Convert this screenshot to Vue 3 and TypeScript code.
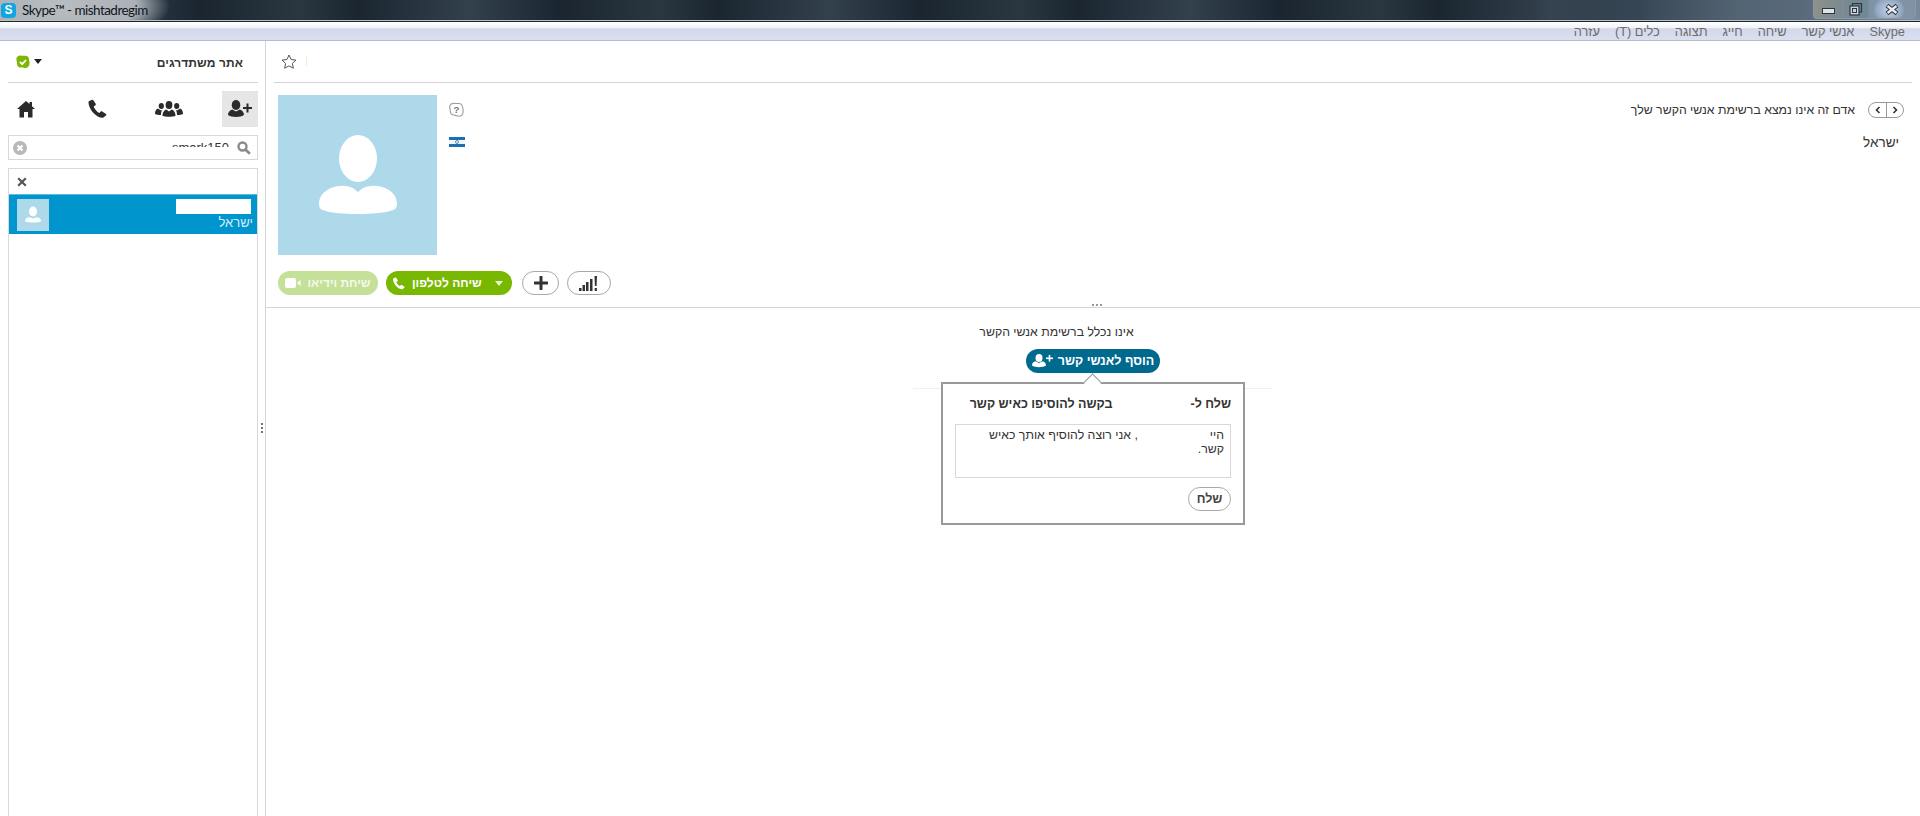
<script setup lang="ts">
const menu: string[] = ['Skype', 'אנשי קשר', 'שיחה', 'חייג', 'תצוגה', 'כלים (T)', 'עזרה']
</script>

<template>
  <div class="app">
    <header class="titlebar">
      <div class="title-left">
        <span class="s-logo">S</span>
        <span class="title-text">Skype™ - mishtadregim</span>
      </div>
      <div class="winbtns">
        <button class="wb wb-min"><i></i></button>
        <button class="wb wb-max">
          <svg width="14" height="13" viewBox="0 0 14 13"><rect x="3.500" y="0.500" width="9" height="8.500" fill="none" stroke="#2c3640" stroke-width="1.200" /><rect x="1" y="3" width="9" height="9" fill="#c9d2da" stroke="#2c3640" stroke-width="1.200" /><rect x="3.500" y="5.500" width="4" height="4" fill="none" stroke="#2c3640" /></svg>
        </button>
        <button class="wb wb-close">
          <svg width="14" height="11" viewBox="0 0 14 11"><path d="M2 1.500l10 8m0-8-10 8" stroke="#27313a" stroke-width="4.400" /><path d="M2.500 2l9 7m0-7-9 7" stroke="#e6ebf0" stroke-width="2.400" /></svg>
        </button>
      </div>
    </header>
    <nav class="menubar">
      <span v-for="m in menu" :key="m" class="menu-item" dir="rtl">{{ m }}</span>
    </nav>
    <div class="body">
      <aside class="side">
        <div class="me">
          <div class="status">
            <svg width="14" height="14" viewBox="0 0 14 14"><path d="M4 .5C5 .3 6 .8 7 .8c1.300 0 3-.6 4.500.5 1.400 1 1.400 2.500 1.600 3.700.2 1.300.8 2.700.3 4.500-.4 1.800-1.900 3.500-3.900 3.500-1.300 0-2.200-.6-3.500-.8C4.500 12.500 3 12.600 1.900 11.200.8 10 1 8.500.9 7.200.8 5.600 0 4.300.6 2.700 1 1.500 2.500.7 4 .5Z" fill="#7db701" /><path d="M4 7l2.200 2.200L10 5" fill="none" stroke="#fff" stroke-width="1.800" /></svg>
            <span class="caret"></span>
          </div>
          <span class="me-name" dir="rtl">אתר משתדרגים</span>
        </div>
        <div class="tabs">
          <button class="tab">
            <svg width="20" height="18" viewBox="0 0 20 18"><path d="M10 1 1 9h2.500v8.500h4.500v-5.500h4v5.500h4.500V9H19l-3-2.700V2h-2.500v2.100Z" fill="#2b2b2b" /></svg>
          </button>
          <button class="tab">
            <svg width="20" height="20" viewBox="0 0 20 20"><path d="M4.500 1 1.700 2.300C1 4.500 2.500 9 5.500 13c3 3.600 7 6 10.500 5.800l3-2.400c.5-.6.300-1.300-.3-1.700l-3.500-2.300c-.6-.3-1.200-.2-1.700.3l-1.200 1.300c-2.200-1-4.800-4-5.600-6.500l1.500-1c.6-.5.800-1.100.5-1.800L6.500 1.600C6 .9 5.200.7 4.500 1Z" fill="#2b2b2b" /></svg>
          </button>
          <button class="tab">
            <svg width="28" height="16" viewBox="0 0 28 16"><g fill="#2b2b2b"><ellipse cx="14" cy="4" rx="3.400" ry="3.900" /><path d="M7.500 15c0-4 2-6 3.800-6.500l2.700 2 2.700-2c1.800.5 3.800 2.500 3.800 6.500-3 1-10 1-13 0Z" /><ellipse cx="6.300" cy="5" rx="2.600" ry="3" /><path d="M0 13c0-3 1-5 2.800-5.600l3.300 2 1.600-.8C6.500 10 6 11.500 6 14 3.500 14 1.500 13.800 0 13Z" /><ellipse cx="21.700" cy="5" rx="2.600" ry="3" /><path d="M28 13c0-3-1-5-2.800-5.600l-3.300 2-1.600-.8c1.200 1.400 1.700 2.900 1.700 5.400 2.500 0 4.500-.2 6-1Z" /></g></svg>
          </button>
          <button class="tab active">
            <svg width="24" height="18" viewBox="0 0 24 18"><g fill="#2b2b2b"><ellipse cx="8" cy="5" rx="4.300" ry="5" /><path d="M0 15c0-3 2-5 4.200-5.600L8 11.500l3.800-2.100C14 10 16 12 16 15c-3 2.500-13 2.500-16 0Z" /><rect x="15" y="7" width="9" height="2" /><rect x="18.500" y="3.500" width="2" height="9" /></g></svg>
          </button>
        </div>
        <div class="search">
          <span class="clear">
            <svg width="14" height="14" viewBox="0 0 14 14"><circle cx="7" cy="7" r="7" fill="#b9b9b9" /><path d="M4.500 4.500l5 5m0-5-5 5" stroke="#fff" stroke-width="2" /></svg>
          </span>
          <span class="search-text">smark150</span>
          <svg width="14" height="14" viewBox="0 0 14 14"><circle cx="5.500" cy="5.500" r="4" fill="none" stroke="#8b8b8b" stroke-width="2.400" /><path d="M8.500 8.500l4.300 4.300" stroke="#8b8b8b" stroke-width="2.800" /></svg>
        </div>
        <div class="results">
          <div class="results-head">
            <svg width="10" height="10" viewBox="0 0 10 10"><path d="M1.200 1.200l7.600 7.600m0-7.600-7.600 7.600" stroke="#555" stroke-width="2.200" /></svg>
          </div>
          <div class="result">
            <div class="mini-avatar">
              <svg width="18" height="18" viewBox="0 0 18 18"><ellipse cx="9" cy="5.500" rx="4" ry="5" fill="#fff" /><path d="M1 15c0-2.500 2-3.500 4.500-3.800L9 12.500l3.500-1.300C15 11.500 17 12.500 17 15c0 2-16 2-16 0Z" fill="#fff" /></svg>
            </div>
            <div class="result-text">
              <span class="redact"></span>
              <span class="result-country" dir="rtl">ישראל</span>
            </div>
          </div>
        </div>
      </aside>
      <div class="gripper"><i></i><i></i><i></i></div>
      <main class="main">
        <div class="toolbar">
          <svg width="16" height="15" viewBox="0 0 16 15"><path d="M8 1l2.100 4.500 4.900.6-3.600 3.300.9 4.800L8 11.900l-4.300 2.300.9-4.800L1 6.100l4.900-.6Z" fill="none" stroke="#555" stroke-width="1" /></svg>
          <span class="tick"></span>
        </div>
        <section class="profile">
          <div class="profile-top">
            <div class="big-avatar">
              <svg width="80" height="80" viewBox="0 0 80 80"><ellipse cx="40" cy="23.500" rx="19" ry="23.500" fill="#fff" /><path d="M1 69c0-8 5-13 12-16 8-3 15-3 22 0l5 4 5-4c7-3 14-3 22 0 7 3 12 8 12 16 0 4-2 6-7 7-11 4-54 4-64 0C3 75 1 73 1 69Z" fill="#fff" /></svg>
            </div>
            <div class="icons-col">
              <svg width="15" height="16" viewBox="0 0 14 14"><path d="M4 .8C5 .6 6 1 7 1c1.300 0 3-.5 4.300.5 1.300 1 1.300 2.400 1.500 3.600.2 1.300.7 2.600.3 4.300-.4 1.700-1.800 3.400-3.700 3.400-1.300 0-2.200-.6-3.400-.8-1.400-.2-2.900-.1-3.900-1.400C1 9.400 1.200 8 1.100 6.800 1 5.400.3 4.200.9 2.800 1.300 1.700 2.600 1 4 .8Z" fill="none" stroke="#9b9b9b" stroke-width="1" /><text x="7" y="10" text-anchor="middle" class="q">?</text></svg>
              <span class="flag"><i></i></span>
            </div>
            <div class="profile-info">
              <div class="status-line">
                <span class="status-msg" dir="rtl">אדם זה אינו נמצא ברשימת אנשי הקשר שלך</span>
                <span class="pager">
                  <svg width="8" height="8" viewBox="0 0 8 8"><path d="M5.500 1 2.500 4l3 3" fill="none" stroke="#333" stroke-width="1.600" /></svg>
                  <svg width="8" height="8" viewBox="0 0 8 8"><path d="M2.500 1l3 3-3 3" fill="none" stroke="#333" stroke-width="1.600" /></svg>
                </span>
              </div>
              <div class="country" dir="rtl">ישראל</div>
            </div>
          </div>
          <div class="actions">
            <button class="btn video">
              <svg width="16" height="10" viewBox="0 0 16 10"><rect width="11" height="10" rx="2" fill="#fff" /><path d="M12 5l3.500-3v6Z" fill="#fff" /></svg>
              <span dir="rtl">שיחת וידיאו</span>
            </button>
            <button class="btn call">
              <svg width="13" height="13" viewBox="0 0 20 20"><path d="M4.500 1 1.700 2.300C1 4.500 2.500 9 5.500 13c3 3.600 7 6 10.500 5.800l3-2.400c.5-.6.300-1.300-.3-1.700l-3.500-2.300c-.6-.3-1.200-.2-1.700.3l-1.200 1.300c-2.200-1-4.800-4-5.600-6.500l1.500-1c.6-.5.800-1.100.5-1.800L6.500 1.600C6 .9 5.200.7 4.500 1Z" fill="#fff" /></svg>
              <span dir="rtl">שיחה לטלפון</span>
              <span class="call-caret"></span>
            </button>
            <button class="btn round plus">
              <svg width="14" height="14" viewBox="0 0 14 14"><path d="M7 1v12M1 7h12" stroke="#333" stroke-width="3" stroke-linecap="round" /></svg>
            </button>
            <button class="btn round signal">
              <svg width="20" height="15" viewBox="0 0 20 15"><g fill="#333"><rect x="0" y="12" width="2.500" height="3" /><rect x="3.500" y="9" width="2.500" height="6" /><rect x="7" y="6" width="2.500" height="9" /><rect x="11" y="3" width="2.500" height="12" /><path d="M15.500 0h2.500l-.4 10h-1.700Z" /><rect x="15.700" y="12" width="2.200" height="3" /></g></svg>
            </button>
          </div>
          <span class="split-dots"><i></i><i></i><i></i></span>
        </section>
        <section class="chat">
          <p class="not-in" dir="rtl">אינו נכלל ברשימת אנשי הקשר</p>
          <button class="add-btn">
            <svg width="21" height="14" viewBox="0 0 21 14"><g fill="#fff"><ellipse cx="7" cy="4" rx="3.500" ry="4" /><path d="M0 11.500c0-2.500 1.700-3.800 3.500-4.200L7 9l3.500-1.700c1.800.4 3.500 1.700 3.500 4.200-3 2.200-11 2.200-14 0Z" /><rect x="14" y="3.500" width="7" height="1.600" /><rect x="16.700" y="1" width="1.600" height="6.600" /></g></svg>
            <span dir="rtl">הוסף לאנשי קשר</span>
          </button>
          <div class="popover">
            <span class="pop-caret"></span>
            <div class="pop-head" dir="rtl">
              <strong>שלח ל-</strong>
              <strong>בקשה להוסיפו כאיש קשר</strong>
            </div>
            <div class="msg" dir="rtl">
              <span class="hi">היי</span><span class="gap"></span>, אני רוצה להוסיף אותך כאיש<br />קשר.
            </div>
            <div class="pop-foot">
              <button class="send" dir="rtl">שלח</button>
            </div>
          </div>
        </section>
      </main>
    </div>
  </div>
</template>

<style>
html, body { margin: 0; background: #fff; }
</style>

<style scoped>
.app {
  width: 1920px;
  height: 816px;
  display: flex;
  flex-direction: column;
  overflow: hidden;
  font-family: "Liberation Sans", "DejaVu Sans", sans-serif;
  color: #333;
  background: #fff;
}
button { font: inherit; padding: 0; margin: 0; }
.titlebar {
  height: 21px;
  flex: none;
  display: flex;
  justify-content: space-between;
  align-items: flex-start;
  border-bottom: 1px solid #20262c;
  box-shadow: inset 0 -1px 0 #b8c0c8;
  background:
    radial-gradient(ellipse 110px 40px at 60px 6px, #b9bec2 0%, #aab0b5 70%, rgba(170, 176, 181, 0) 100%),
    linear-gradient(90deg, rgba(0,0,0,0) 0 80%, rgba(90,110,130,.5) 86%, rgba(150,170,190,.7) 100%),
    repeating-linear-gradient(90deg, #1b2630 0, #33414d 110px, #1a2530 200px, #2a3640 300px, #1a2530 360px);
}
.title-left { display: flex; align-items: center; height: 20px; }
.s-logo {
  width: 15px;
  height: 15px;
  margin: 0 6px 0 1px;
  border-radius: 4px;
  background: #12a5e3;
  color: #fff;
  font: bold 12px/15px "Liberation Sans", sans-serif;
  text-align: center;
}
.title-text {
  font: 13.500px "Lato", "Liberation Sans", sans-serif;
  letter-spacing: -.55px;
  color: #10161c;
}
.winbtns {
  display: flex;
  height: 18px;
  margin-right: 4px;
  border: 1px solid #8b99a6;
  border-top: 0;
  border-radius: 0 0 4px 4px;
  background: linear-gradient(90deg, #8f9089, #6f8794 45%, #7f98a6);
}
.wb {
  border: 0;
  border-right: 1px solid #7e8d9a;
  background: none;
  display: flex;
  align-items: center;
  justify-content: center;
  width: 29px;
}
.wb-max { width: 26px; }
.wb-close {
  width: 46px;
  border-right: 0;
  background: radial-gradient(ellipse 16px 14px at 20px 10px, #c6d2ee, #93a7bf 80%, #7f93a5);
}
.wb-min i {
  display: block;
  width: 11px;
  height: 4px;
  background: #dfe4e8;
  border: 1px solid #2c3640;
  margin-top: 4px;
}
.menubar {
  height: 18px;
  flex: none;
  display: flex;
  flex-direction: row-reverse;
  gap: 15px;
  align-items: center;
  padding: 0 15px 0 0;
  border-bottom: 1px solid #b8bcc6;
  background: linear-gradient(#fff 0, #f0f2f8 33%, #d3d8ea 37%, #dadff0 100%);
  font-size: 12.800px;
  line-height: 20px;
  color: #6c6c6c;
}
.menu-item { margin-top: 2px; }
.body { flex: 1; display: flex; min-height: 0; }
.side {
  width: 258px;
  flex: none;
  padding-left: 8px;
  box-sizing: border-box;
  display: flex;
  flex-direction: column;
}
.me {
  height: 42px;
  flex: none;
  box-sizing: border-box;
  display: flex;
  align-items: center;
  justify-content: space-between;
  border-bottom: 1px solid #d4d4d4;
  padding: 0 15px 0 8px;
}
.status { display: flex; align-items: center; gap: 4px; }
.caret {
  width: 0;
  height: 0;
  border: 4px solid transparent;
  border-top: 5px solid #222;
  border-bottom: 0;
}
.me-name { font-size: 12px; font-weight: bold; color: #333; letter-spacing: .1px; margin-top: 2px; }
.tabs {
  height: 36px;
  margin: 8px 0;
  flex: none;
  display: flex;
  justify-content: space-between;
  align-items: center;
}
.tab {
  width: 36px;
  height: 36px;
  border: 0;
  background: none;
  display: flex;
  align-items: center;
  justify-content: center;
}
.tab.active { background: #e6e6e6; }
.search {
  height: 25px;
  flex: none;
  box-sizing: border-box;
  border: 1px solid #d8d8d8;
  display: flex;
  align-items: center;
  gap: 8px;
  padding: 0 6px 0 4px;
}
.clear { height: 14px; }
.search-text {
  flex: 1;
  height: 6px;
  overflow: hidden;
  text-align: right;
  font-size: 13px;
  line-height: 13px;
  color: #333;
  margin-top: -7px;
}
.results {
  margin-top: 8px;
  flex: 1;
  border: 1px solid #d8d8d8;
  border-bottom: 0;
}
.results-head {
  height: 25px;
  display: flex;
  align-items: center;
  padding-left: 8px;
}
.result {
  height: 40px;
  background: #0095cc;
  display: flex;
  align-items: center;
  justify-content: space-between;
  padding: 0 4px 0 8px;
  border-top: 1px solid #5cbbe0;
  box-sizing: border-box;
}
.mini-avatar {
  width: 32px;
  height: 32px;
  background: #add9ea;
  display: flex;
  align-items: center;
  justify-content: center;
}
.result-text {
  display: flex;
  flex-direction: column;
  align-items: flex-end;
}
.redact { width: 75px; height: 15px; background: #fff; margin-right: 2px; }
.result-country { color: #d5edf8; font-size: 13px; line-height: 16px; margin-top: 1px; }
.gripper {
  width: 7px;
  flex: none;
  box-sizing: border-box;
  display: flex;
  flex-direction: column;
  align-items: center;
  justify-content: center;
  gap: 2px;
  padding-bottom: 2px;
}
.gripper i { width: 2px; height: 2px; background: #66757f; }
.main {
  flex: 1;
  min-width: 0;
  border-left: 1px solid #d4d4d4;
  display: flex;
  flex-direction: column;
}
.toolbar {
  height: 42px;
  flex: none;
  box-sizing: border-box;
  margin: 0 8px;
  padding: 0 7px;
  border-bottom: 1px solid #d4d4d4;
  display: flex;
  align-items: center;
  gap: 9px;
}
.tick { width: 1px; height: 9px; background: #f5ecc8; }
.profile {
  height: 225px;
  flex: none;
  box-sizing: border-box;
  position: relative;
  border-bottom: 1px solid #d4d4d4;
  padding: 12px 16px 0 12px;
}
.profile-top { display: flex; }
.big-avatar {
  width: 159px;
  height: 160px;
  background: #add9ea;
  display: flex;
  justify-content: center;
  align-items: flex-end;
}
.big-avatar svg { width: 80px; height: 80px; margin-bottom: 40px; }
.icons-col {
  margin-left: 12px;
  padding-top: 7px;
  display: flex;
  flex-direction: column;
  gap: 19px;
}
.q { font: bold 9px "Liberation Sans", sans-serif; fill: #777; }
.flag {
  width: 16px;
  height: 10px;
  display: block;
  box-sizing: border-box;
  border-top: 3px solid #1f6fae;
  border-bottom: 3px solid #1f6fae;
  background: #f2f6fa;
  position: relative;
}
.flag i {
  position: absolute;
  left: 6px;
  top: 0;
  width: 4px;
  height: 4px;
  border: 1px solid #4a8fc5;
  box-sizing: border-box;
  border-radius: 50%;
}
.profile-info { flex: 1; }
.status-line {
  display: flex;
  align-items: center;
  justify-content: flex-end;
  gap: 13px;
  margin-top: 7px;
}
.status-msg { font-size: 12.300px; color: #333; }
.pager {
  width: 36px;
  height: 16px;
  box-sizing: border-box;
  border: 1px solid #999;
  border-radius: 8px;
  display: flex;
  align-items: center;
  justify-content: space-around;
  background: linear-gradient(90deg, transparent 49%, #999 49% 53%, transparent 53%);
}
.country { font-size: 13.500px; text-align: right; margin: 17px 5px 0 0; color: #333; }
.actions {
  display: flex;
  align-items: center;
  margin-top: 16px;
  gap: 8px;
}
.btn {
  height: 24px;
  border-radius: 12px;
  border: 0;
  display: flex;
  align-items: center;
  justify-content: center;
  font-weight: bold;
  font-size: 12px;
  color: #fff;
}
.video { width: 100px; background: #c4e099; gap: 6px; color: #f4f9ea; }
.call { width: 126px; background: #79b800; gap: 7px; justify-content: flex-start; padding-left: 6px; box-sizing: border-box; }
.call-caret {
  width: 0;
  height: 0;
  margin: 0 9px 0 auto;
  border: 4px solid transparent;
  border-top: 5px solid #e8f3cf;
  border-bottom: 0;
}
.round { background: #fff; box-sizing: border-box; border: 1px solid #a8a8a8; }
.plus { width: 37px; margin-left: 2px; }
.signal { width: 44px; }
.split-dots {
  position: absolute;
  right: 818px;
  bottom: 1px;
  display: flex;
  gap: 2px;
}
.split-dots i { width: 2px; height: 2px; background: #999; }
.chat {
  flex: 1;
  display: flex;
  flex-direction: column;
  align-items: center;
}
.not-in {
  margin: 16px 0 0;
  padding-right: 73px;
  font-size: 12.300px;
  line-height: 16px;
  color: #333;
}
.add-btn {
  width: 134px;
  height: 24px;
  margin-top: 9px;
  border: 0;
  border-radius: 12px;
  background: #006a8e;
  color: #fff;
  font-weight: bold;
  font-size: 12.500px;
  display: flex;
  align-items: center;
  justify-content: center;
  gap: 5px;
}
.popover {
  width: 304px;
  height: 143px;
  margin-top: 9px;
  box-sizing: border-box;
  border: 2px solid #999;
  background: #fff;
  position: relative;
  padding: 0 12px;
}
.popover::before,
.popover::after {
  content: "";
  position: absolute;
  top: 4px;
  height: 1px;
  width: 28px;
  background: #f0f0f0;
}
.popover::before { left: -30px; }
.popover::after { right: -30px; }
.pop-caret {
  position: absolute;
  left: 143px;
  top: -8px;
  width: 12px;
  height: 12px;
  background: #fff;
  border-left: 1px solid #999;
  border-top: 1px solid #999;
  transform: rotate(45deg);
}
.pop-head {
  display: flex;
  gap: 78px;
  margin-top: 12px;
  font-size: 12.500px;
  line-height: 16px;
  color: #333;
  justify-content: flex-start;
}
.msg {
  height: 54px;
  margin-top: 12px;
  box-sizing: border-box;
  border: 1px solid #d8d8d8;
  padding: 3px 6px;
  font-size: 12.300px;
  line-height: 14px;
  color: #333;
}
.gap { display: inline-block; width: 72px; }
.pop-foot { display: flex; justify-content: flex-end; margin-top: 9px; }
.send {
  width: 43px;
  height: 24px;
  border: 1px solid #aaa;
  border-radius: 12px;
  background: #fff;
  font-weight: bold;
  font-size: 12.500px;
  color: #444;
}
</style>
